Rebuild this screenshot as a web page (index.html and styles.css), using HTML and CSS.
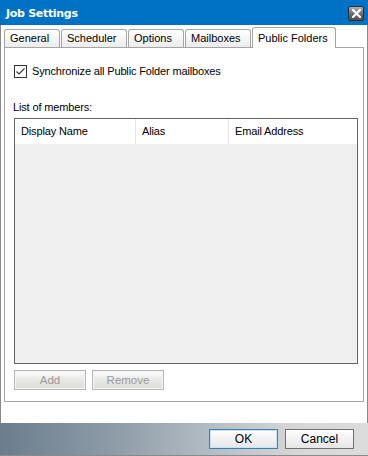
FILE: index.html
```html
<!DOCTYPE html>
<html>
<head>
<meta charset="utf-8">
<link rel="stylesheet" href="styles.css">
</head>
<body>
<div class="window">
  <div class="titlebar">
    <span class="title">Job Settings</span>
    <span class="close"><svg width="9" height="9" viewBox="0 0 9 9"><path d="M1 1 L8 8 M8 1 L1 8" stroke="#fff" stroke-width="2.2" stroke-linecap="square"/></svg></span>
  </div>
  <div class="content">
    <div class="tabs">
      <div class="tab t-general">General</div>
      <div class="tab t-sched">Scheduler</div>
      <div class="tab t-opt">Options</div>
      <div class="tab t-mail">Mailboxes</div>
      <div class="tab t-pub active">Public Folders</div>
    </div>
    <div class="panel">
      <label class="check">
        <span class="box"><svg width="11" height="11" viewBox="0 0 11 11"><path d="M1.5 5.5 L4 8 L9.5 2.5" fill="none" stroke="#333" stroke-width="1.1"/></svg></span>
        <span>Synchronize all Public Folder mailboxes</span>
      </label>
      <div class="listlabel">List of members:</div>
      <div class="list">
        <div class="listhead">
          <div class="col c1">Display Name</div>
          <div class="col c2">Alias</div>
          <div class="col c3">Email Address</div>
        </div>
        <div class="listbody"></div>
      </div>
      <div class="btnrow">
        <button class="btn small" disabled>Add</button>
        <button class="btn small" disabled>Remove</button>
      </div>
    </div>
  </div>
  <div class="footer">
    <button class="btn dlg default">OK</button>
    <button class="btn dlg">Cancel</button>
  </div>
</div>
</body>
</html>
```
FILE: styles.css
```css
* { box-sizing: border-box; }
html, body { margin: 0; padding: 0; }
body { width: 368px; height: 456px; overflow: hidden; background: #fff; }
.window {
  width: 368px; height: 456px;
  display: flex; flex-direction: column;
  border-left: 1px solid #8a8a8a;
  border-right: 1px solid #8a8a8a;
  border-bottom: 1px solid #8a8a8a;
  background: #fff;
}
.titlebar {
  height: 25px; flex: none;
  background: #0072c6;
  display: flex; align-items: center; justify-content: space-between;
  padding: 0 4px 0 6px;
  margin: 0 -1px;
}
.title {
  font-family: "DejaVu Sans", sans-serif; font-weight: bold; font-size: 11px;
  color: #fff; padding-top: 2px; letter-spacing: -0.3px;
}
.close {
  width: 16px; height: 15px; margin-top: 1px;
  border: 1px solid #2e2e2e; border-radius: 2px;
  background: linear-gradient(#b0b0b0, #6a6a6a 55%, #505050);
  display: flex; align-items: center; justify-content: center;
}
.content { padding: 2px 3px 0 3px; flex: none; }
.tabs { display: flex; align-items: flex-end; height: 20px; }
.tab {
  font-family: "Liberation Sans", sans-serif; font-size: 11px; color: #000;
  height: 18px; margin-right: 1px;
  border: 1px solid #a5a5a5; border-bottom: none;
  border-radius: 3px 3px 0 0;
  background: linear-gradient(#ffffff, #ececec);
  padding: 2px 0 0 5px;
  position: relative;
}
.t-general { width: 56px; }
.t-sched { width: 66px; }
.t-opt { width: 56px; }
.t-mail { width: 66px; }
.t-pub { width: 84px; }
.tab.active {
  height: 21px; background: #fff; margin-bottom: -1px; z-index: 1;
  padding-top: 4px;
}
.panel {
  height: 355px;
  border: 1px solid #a5a5a5;
  background: #fff;
  padding: 16px 5px 0 9px;
  font-family: "Liberation Sans", sans-serif; font-size: 11px; letter-spacing: -0.15px; color: #000;
}
.check { display: flex; align-items: center; gap: 5px; height: 14px; }
.box {
  width: 13px; height: 13px; border: 1px solid #333; background: #fff;
  display: flex; align-items: center; justify-content: center;
}
.listlabel { margin-top: 23px; height: 14px; margin-left: -1px; }
.list {
  margin-top: 3px; width: 344px; height: 246px;
  border: 1px solid #646464;
  display: flex; flex-direction: column;
}
.listhead { height: 25px; display: flex; background: #fff; flex: none; }
.col { padding: 6px 0 0 6px; border-right: 1px solid #e5e5e5; }
.c1 { width: 121px; }
.c2 { width: 93px; }
.c3 { flex: 1; border-right: none; }
.listbody { flex: 1; background: #f0f0f0; }
.btnrow { display: flex; gap: 6px; margin-top: 6px; }
.btn {
  font-family: "Liberation Sans", sans-serif; font-size: 11.5px; letter-spacing: 0;
  height: 20px; padding: 0;
  border: 1px solid #adadad;
  background: linear-gradient(#fdfdfd, #e9e9e7 45%, #dcdcd8);
  color: #000;
}
.btn.small { width: 72px; border-color: #b5b5b5; box-shadow: inset 0 0 0 1px #f6f6f6; }
.btn:disabled { color: #9a9a9a; }
.footer {
  margin-top: auto; height: 32px; flex: none;
  background: linear-gradient(90deg, #6b7d8e 0%, #8d9ba7 30%, #b8c0c6 60%, #d6d6d6 80%, #dcdcdc 100%);
  display: flex; align-items: center; justify-content: flex-end;
  padding: 0 14px 1px 0; gap: 7px;
  margin-left: -1px; margin-right: -1px;
  border-left: 1px solid #6b7d8e;
}
.btn.dlg {
  width: 69px; height: 20px;
  border: 1px solid #707070;
  background: linear-gradient(#ffffff, #f2f2f2 50%, #e6e6e6);
  font-size: 12px;
}
.btn.dlg.default { border-color: #3c7fb1; box-shadow: inset 0 0 0 1px #c8e4f8; }
```
